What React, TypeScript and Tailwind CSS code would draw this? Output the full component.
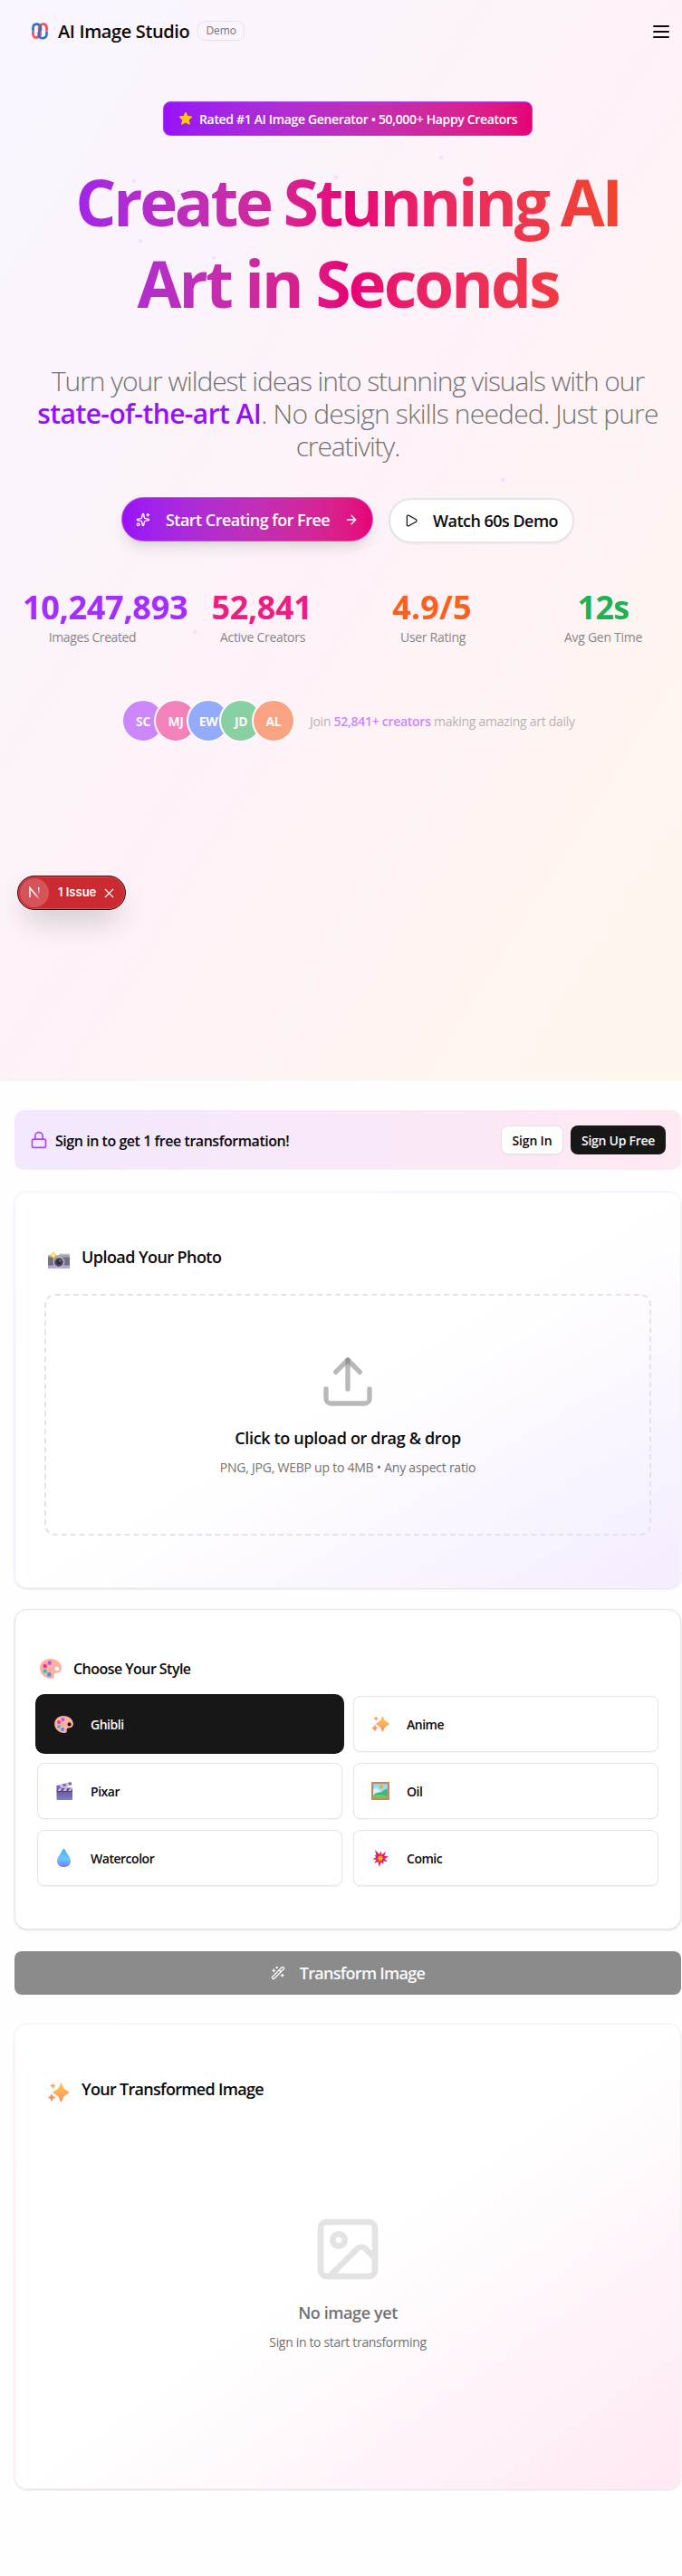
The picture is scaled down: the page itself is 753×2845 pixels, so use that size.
import type { ReactNode } from "react";
import { ArrowRight, Image as ImageIcon, Lock, Play, Sparkles, Upload, WandSparkles, X } from "lucide-react";

type IconProps = { className?: string };

function Logo() {
  return (
    <svg viewBox="0 0 18 19" className="h-[19px] w-[18px]" fill="none" strokeWidth="2.7">
      <path d="M1.5 9.5v3.2c0 5 7 5 8-.2" stroke="#ff4b57" />
      <path d="M9.2 4.2C10.8.2 16.5.6 16.5 5.8v3.5" stroke="#ff4b57" />
      <path d="M8.8 4.8c-1.600 3 1.800 6.400 0 9.600" stroke="#ff4b57" strokeWidth="3.500" />
      <path d="M1.500 9.500V6C1.500 .4 8.600.2 10 5.200c.7 2.300-.7 3.600-1.800 5C6.800 12 7.500 17.200 12 17.200c3 0 4.500-2 4.500-4.600V9.500" stroke="#2b72c9" strokeWidth="2.600" />
    </svg>
  );
}

function Camera({ className }: IconProps) {
  return (
    <svg viewBox="0 0 24 20" className={className}>
      <rect x="12" y="2.500" width="12" height="6" rx="1" fill="#c5c3cb" />
      <rect y="4.500" width="24" height="14.500" rx="1" fill="#74707d" />
      <rect y="15.500" width="24" height="3.500" rx="1" fill="#b7a7d8" />
      <path d="M0 4.500h24v2H0z" fill="#aaa8b1" />
      <circle cx="12" cy="12" r="6.300" fill="#c6bbd9" />
      <circle cx="12" cy="12" r="5" fill="#57505f" />
      <circle cx="12" cy="12" r="2.800" fill="#30263d" />
      <circle cx="13" cy="10.800" r="1" fill="#8f79b5" />
      <path d="M6 0l1.600 2.700L10.500 4.300 7.600 6 6 9 4.400 6 1.500 4.300l2.900-1.600z" fill="#f5c84c" />
      <path d="M6 2.200l2 2.100-2 2.200-2-2.200z" fill="#fff0a0" />
    </svg>
  );
}

function Palette({ className }: IconProps) {
  return (
    <svg viewBox="0 0 24 22" className={className}>
      <path
        fillRule="evenodd"
        d="M11.500 0C5 0 0 4.500 0 10.500 0 17 6 22 12.500 22c2.500 0 3.700-1.200 3.300-2.800-.6-2.200.2-3.700 2.700-3.700 3.500 0 5.500-2 5.500-5C24 4.500 18.500 0 11.500 0zM19 8.500a2.400 2.400 0 110 4.800 2.400 2.400 0 010-4.800z"
        fill="#ffb09e"
      />
      <circle cx="10.800" cy="4.600" r="2.300" fill="#b955ea" />
      <circle cx="5.700" cy="8" r="2.300" fill="#f3348f" />
      <circle cx="5.700" cy="13.600" r="2.200" fill="#36bdb9" />
      <circle cx="10.300" cy="17.400" r="2.300" fill="#3d92f2" />
    </svg>
  );
}

function Stars({ className }: IconProps) {
  return (
    <svg viewBox="0 0 24 22" className={className}>
      <defs>
        <linearGradient id="stars" x1="0" y1="0" x2="0" y2="1">
          <stop offset="0" stopColor="#fdc94c" />
          <stop offset="1" stopColor="#fb8f68" />
        </linearGradient>
      </defs>
      <path d="M15 .2c1 0 1.500 4.600 3.500 6.600S24 10 24 11s-3.500 2.200-5.500 4.200S16 21.800 15 21.800s-1.500-4.600-3.500-6.600S6 12 6 11s3.500-2.200 5.500-4.200S14 .2 15 .2z" fill="url(#stars)" />
      <path d="M6 .2l1.200 2.300 2.300 1.100-2.300 1.200L6 7.100 4.800 4.800 2.500 3.600l2.300-1.100z" fill="#fba95b" />
      <path d="M4.500 12l1.500 3 3 1.500-3 1.400-1.500 3.500L3 17.900 0 16.500 3 15z" fill="#fb9263" />
    </svg>
  );
}

function Clapper({ className }: IconProps) {
  return (
    <svg viewBox="0 0 18 20" className={className}>
      <defs>
        <linearGradient id="clap" x1="0" y1="0" x2="0" y2="1">
          <stop offset="0" stopColor="#66488c" />
          <stop offset="1" stopColor="#7c80cc" />
        </linearGradient>
      </defs>
      <rect x=".500" y="6.500" width="17.500" height="13.500" rx="1" fill="url(#clap)" />
      <path d="M0 4.200L16.500 0l.9 3.200L.9 7.400z" fill="#8168b4" />
      <path d="M3.500 3.300l3-.8 2 2.900-3 .8zM10 1.700l3-.8 1.800 2.900-3 .8z" fill="#d5c6f3" />
      <path d="M3.500 7h3l-2 3h-3zM9.500 7h3l-2 3h-3zM15.500 7H18l-2 3h-2.500z" fill="#cbbdf0" />
      <rect x=".500" y="10" width="17.500" height="1" fill="#59407c" />
    </svg>
  );
}

function Picture({ className }: IconProps) {
  return (
    <svg viewBox="0 0 20 20" className={className}>
      <rect width="20" height="20" rx=".8" fill="#c98560" />
      <rect x="2.200" y="2.200" width="15.600" height="15.600" fill="#8fdcfb" />
      <path d="M2.200 8l4-1.500L12 12l-9.800 2z" fill="#d9f2fb" />
      <path d="M2.200 15.500C6 10 9.500 12 11.500 11s4-4 6.300-3v9.800H2.200z" fill="#41b878" />
      <path d="M2.200 15.500c5-2 11-1.500 15.600 1v1.300H2.200z" fill="#6bd14c" />
      <circle cx="11" cy="5.200" r="2" fill="#f6a823" />
    </svg>
  );
}

function Droplet({ className }: IconProps) {
  return (
    <svg viewBox="0 0 15 20" className={className}>
      <defs>
        <linearGradient id="drop" x1="0" y1="0" x2="0" y2="1">
          <stop offset="0" stopColor="#4fb0ea" />
          <stop offset=".55" stopColor="#69c9ff" />
          <stop offset="1" stopColor="#7577fb" />
        </linearGradient>
      </defs>
      <path d="M7.500 0c.7 0 1.200.6 1.600 1.400C10.700 5 15 9 15 13.200 15 17.200 11.800 20 7.500 20S0 17.200 0 13.200C0 9 4.300 5 5.900 1.400 6.300.6 6.800 0 7.500 0z" fill="url(#drop)" />
    </svg>
  );
}

function Burst({ className }: IconProps) {
  return (
    <svg viewBox="0 0 18 19" className={className}>
      <path d="M3 0l5 5 1.500-3.500 1 4 4.500-3.500-1.800 5 4.800.2-4.300 2.800 3.500 3.300-4.700-1-.2 3.700-2.500-2.800L7.800 19 6.300 13l-4 2 2.200-4.200L.2 10.300l4-2L2.500 6l2 .2z" fill="#e51a62" />
      <path d="M6.600 6.500l2 .8 1.800-1.200.3 2 1.700 1-1.600 1.200.2 2-2-.8-1.700 1.400-.2-2.200-1.800-1.200 1.700-1z" fill="#fbb32c" />
    </svg>
  );
}

const dots = [
  "left-[485px] top-[172px]",
  "left-[369px] top-[194px]",
  "left-[146px] top-[198px]",
  "left-[195px] top-[209px]",
  "left-[153px] top-[264px]",
  "left-[234px] top-[283px]",
  "left-[553px] top-[528px]",
  "left-[213px] top-[696px]",
];

const stats = [
  { value: "10,247,893", label: "Images Created", color: "text-[#a32eff] tracking-[-0.3px]", labelClass: "tracking-[-0.4px]" },
  { value: "52,841", label: "Active Creators", color: "pr-0.5 text-[#ec1e84] tracking-[-0.4px]", labelClass: "tracking-[-0.3px]" },
  { value: "4.9/5", label: "User Rating", color: "pr-0.5 text-[#fb601f] tracking-[0.1px]", labelClass: "tracking-[-0.29px]" },
  { value: "12s", label: "Avg Gen Time", color: "text-[#1fb155] tracking-[-0.7px]", labelClass: "tracking-[-0.28px]" },
];

const avatars = [
  { initials: "SC", color: "bg-[#cc87fb]" },
  { initials: "MJ", color: "bg-[#f381ba]" },
  { initials: "EW", color: "bg-[#92acfb]" },
  { initials: "JD", color: "bg-[#88d0a2]" },
  { initials: "AL", color: "bg-[#faa382]" },
];

const styles: { name: string; icon: ReactNode }[] = [
  { name: "Ghibli", icon: <Palette className="h-[19px] w-[21px]" /> },
  { name: "Anime", icon: <Stars className="h-[18px] w-5" /> },
  { name: "Pixar", icon: <Clapper className="h-5 w-[18px]" /> },
  { name: "Oil", icon: <Picture className="size-5" /> },
  { name: "Watercolor", icon: <Droplet className="h-5 w-[15px]" /> },
  { name: "Comic", icon: <Burst className="h-[19px] w-[18px]" /> },
];

function Header() {
  return (
    <header className="flex h-[68px] items-center pl-[35px] pr-[11px]">
      <Logo />
      <span className="ml-[11px] mt-px text-xl font-semibold tracking-[-0.37px] text-neutral-950">AI Image Studio</span>
      <span className="ml-[9px] flex h-[22px] items-center rounded-lg border border-neutral-200 px-2 text-xs font-medium tracking-[-0.1px] text-neutral-500">
        Demo
      </span>
      <svg viewBox="0 0 24 24" className="ml-auto mt-px size-6 stroke-neutral-950" fill="none" strokeWidth="2" strokeLinecap="round">
        <path d="M4 6h16M4 12h16M4 18h16" />
      </svg>
    </header>
  );
}

function Hero() {
  return (
    <section className="relative h-[1194px] bg-linear-to-br from-purple-50 via-pink-50 to-orange-50">
      {dots.map((d) => (
        <span key={d} className={`absolute size-1 rounded-full bg-[#efdfff] ${d}`} />
      ))}
      <Header />
      <div className="relative ml-4 flex w-[736px] flex-col items-center pt-11">
        <div className="flex h-[38px] w-[408px] items-center rounded-lg border border-[#a640f5] bg-linear-to-r from-[#9810fa] to-[#e60076] pl-4 text-sm font-semibold text-white">
          <svg viewBox="0 0 24 24" className="mr-[7px] size-4 shrink-0 fill-[#ffc800]">
            <path d="M12 1.500l3.200 6.700 7.300.9-5.400 5.100 1.400 7.300L12 18l-6.500 3.500 1.400-7.300L1.500 9.100l7.300-.9z" stroke="#ffc800" strokeWidth="1.500" strokeLinejoin="round" />
          </svg>
          <span className="mt-px whitespace-nowrap tracking-[-0.34px]">Rated #1 AI Image Generator • 50,000+ Happy Creators</span>
        </div>

        <h1 className="mt-7 w-[704px] bg-linear-to-r from-[#9810fa] via-[#e60076] to-[#f54900] bg-clip-text text-center text-[71px] font-bold leading-[90px] text-transparent">
          <span className="block whitespace-nowrap tracking-[-3.300px] [word-spacing:-1px]">Create Stunning AI</span>
          <span className="block whitespace-nowrap tracking-[-2.900px]">Art in Seconds</span>
        </h1>

        <p className="mt-[45px] w-[736px] whitespace-nowrap text-center text-3xl font-light leading-9 text-neutral-500">
          <span className="block tracking-[-1.07px]">Turn your wildest ideas into stunning visuals with our</span>
          <span className="block tracking-[-0.8px]">
            <span className="font-semibold tracking-[-0.6px] text-[#9810fa]">state-of-the-art AI</span>. No design skills needed. Just pure
          </span>
          <span className="block tracking-[-1.1px]">creativity.</span>
        </p>

        <div className="mt-[38px] flex w-[500px] items-start gap-[17px]">
          <button className="flex h-[49px] w-[278px] items-center rounded-full border border-[#c850d8] bg-linear-to-r from-[#9810fa] to-[#e60076] pl-[15px] text-lg font-semibold text-white shadow-lg">
            <Sparkles className="size-4" />
            <span className="ml-[17px] whitespace-nowrap tracking-[-0.53px]">Start Creating for Free</span>
            <ArrowRight className="ml-4 size-4" />
          </button>
          <button className="mt-px flex h-[50px] w-[205px] items-center rounded-full border-2 border-neutral-200 bg-white pl-[15px] text-lg font-semibold text-neutral-950 shadow-xs">
            <Play className="size-4" strokeWidth={1.8} />
            <span className="ml-4 whitespace-nowrap tracking-[-0.52px]">Watch 60s Demo</span>
          </button>
        </div>

        <div className="mt-[51px] grid w-[720px] grid-cols-4 gap-8">
          {stats.map((s) => (
            <div key={s.label} className="flex min-w-0 flex-col">
              <div className={`flex text-4xl font-bold leading-10 ${s.color} ${s.label === "Images Created" ? "pl-px" : "justify-center"}`}>{s.value}</div>
              <div className={`mt-[3px] text-center text-sm leading-5 text-[#8a8589] ${s.labelClass}`}>{s.label}</div>
            </div>
          ))}
        </div>

        <div className="mt-[58px] flex w-[500px] items-center">
          <div className="flex -space-x-3">
            {avatars.map((a) => (
              <div key={a.initials} className={`flex size-12 items-center justify-center rounded-full border-2 border-[#fffafd] pt-px text-sm font-bold tracking-[-0.4px] text-[#fffafd] ${a.color}`}>
                {a.initials}
              </div>
            ))}
          </div>
          <p className="ml-4 whitespace-nowrap pt-0.5 text-sm tracking-[-0.28px] text-[#b9b2b5]">
            Join <span className="font-semibold text-[#cc87fd]">52,841+ creators</span> making amazing art daily
          </p>
        </div>
      </div>

      <div className="absolute left-[19px] top-[967px] flex h-[38px] w-[120px] items-center rounded-full border border-[#2a1518] bg-[#ca2a30] pl-[2px] shadow-[inset_0_0_0_1px_#dd4a50,0_16px_32px_-8px_rgba(0,0,0,0.24)]">
        <span className="flex size-8 items-center justify-center rounded-full bg-[#d5545a]">
          <svg viewBox="0 0 12 14" className="h-[14px] w-3" fill="none" strokeWidth="1.500">
            <defs>
              <linearGradient id="diag" x1="0" y1="0" x2="1" y2="1">
                <stop offset=".6" stopColor="#fff" />
                <stop offset="1" stopColor="#fff" stopOpacity="0" />
              </linearGradient>
              <linearGradient id="stem" x1="0" y1="0" x2="0" y2="1">
                <stop stopColor="#fff" />
                <stop offset="1" stopColor="#fff" stopOpacity="0" />
              </linearGradient>
            </defs>
            <path d="M1 12V1.500L11.500 14" stroke="url(#diag)" />
            <rect x="10" y="1" width="1.500" height="8" fill="url(#stem)" />
          </svg>
        </span>
        <span className="ml-[10px] whitespace-nowrap font-['Inter'] text-[13px] font-semibold text-white">1 Issue</span>
        <X className="ml-[6px] size-[17px] text-white" strokeWidth={1.5} />
      </div>
    </section>
  );
}

export default function App() {
  return (
    <div className="h-[2845px] w-full overflow-hidden bg-[#fefefe] font-['Open_Sans',sans-serif] text-neutral-950">
      <Hero />
      <main className="ml-4 w-[736px] pt-8">
        <div className="flex h-[66px] items-center rounded-[10px] bg-linear-to-r from-[#f3e8ff] to-[#ffe8f2] pl-[17px] pr-[17px]">
          <Lock className="size-5 text-[#ad46ff]" />
          <span className="ml-2 mt-0.5 whitespace-nowrap font-semibold tracking-[-0.46px]">Sign in to get 1 free transformation!</span>
          <button className="ml-auto h-8 w-[69px] rounded-lg border border-neutral-200 bg-white pt-px text-sm font-semibold tracking-[-0.15px] shadow-xs">Sign In</button>
          <button className="ml-2 h-8 w-[105px] whitespace-nowrap rounded-lg bg-neutral-900 pt-px text-sm font-semibold tracking-[-0.27px] text-neutral-50">Sign Up Free</button>
        </div>

        <section className="mt-6 h-[438px] rounded-[14px] border border-purple-100/60 bg-linear-to-br from-white via-white to-[#f5ecff] px-8 pt-[57px] shadow-sm">
          <h2 className="flex h-7 items-center pl-1 text-lg font-semibold">
            <Camera className="mt-[7px] h-5 w-6" />
            <span className="ml-[13px] whitespace-nowrap tracking-[-0.57px]">Upload Your Photo</span>
          </h2>
          <div className="mt-[27px] flex h-[267px] flex-col items-center rounded-xl border-2 border-dashed border-[#e5e3e8] pt-[63px]">
            <Upload className="size-16 text-neutral-500/50" />
            <p className="mt-4 whitespace-nowrap text-lg font-semibold leading-7 tracking-[-0.34px]">Click to upload or drag &amp; drop</p>
            <p className="mt-[9px] whitespace-nowrap text-sm leading-5 tracking-[-0.24px] text-neutral-500">PNG, JPG, WEBP up to 4MB • Any aspect ratio</p>
          </div>
        </section>

        <section className="mt-[23px] h-[354px] rounded-[14px] border border-neutral-200 bg-white px-6 pt-[51px] shadow-sm">
          <h2 className="flex h-7 items-center pl-[3px] text-base font-semibold">
            <Palette className="h-[22px] w-6" />
            <span className="ml-[13px] whitespace-nowrap tracking-[-0.55px]">Choose Your Style</span>
          </h2>
          <div className="mt-[16px] grid grid-cols-2 gap-3">
            {styles.map((s, i) => (
              <button
                key={s.name}
                className={
                  i === 0
                    ? "flex h-[62px] items-center rounded-lg bg-neutral-900 pl-[18px] text-sm font-semibold text-neutral-50 ring-2 ring-neutral-900"
                    : "flex h-[62px] items-center rounded-lg border border-neutral-200 bg-white pl-[17px] text-sm font-semibold shadow-xs"
                }
              >
                <span className="flex w-[23px] items-center justify-center">{s.icon}</span>
                <span className="ml-[18px] mt-0.5 tracking-[-0.48px]">{s.name}</span>
              </button>
            ))}
          </div>
        </section>

        <button className="mt-6 flex h-12 w-full items-center justify-center rounded-lg bg-[#8b8b8b] text-lg font-semibold text-neutral-50">
          <WandSparkles className="size-4" />
          <span className="ml-4 tracking-[-0.72px]">Transform Image</span>
        </button>

        <section className="mt-8 h-[514px] rounded-[14px] border border-pink-100/60 bg-linear-to-br from-white via-white to-[#ffe8f3] px-8 pt-[57px] shadow-sm">
          <h2 className="flex h-7 items-center pl-[3px] text-lg font-semibold">
            <Stars className="mt-[7px] h-[22px] w-[25px]" />
            <span className="ml-[13px] whitespace-nowrap tracking-[-0.7px]">Your Transformed Image</span>
          </h2>
          <div className="flex flex-col items-center pt-[123px]">
            <ImageIcon className="size-20 text-[#e3e3e3]" />
            <p className="mt-4 text-lg font-semibold leading-7 tracking-[-0.4px] text-neutral-500">No image yet</p>
            <p className="mt-[9px] text-sm leading-5 tracking-[-0.33px] text-neutral-500">Sign in to start transforming</p>
          </div>
        </section>
      </main>
    </div>
  );
}
